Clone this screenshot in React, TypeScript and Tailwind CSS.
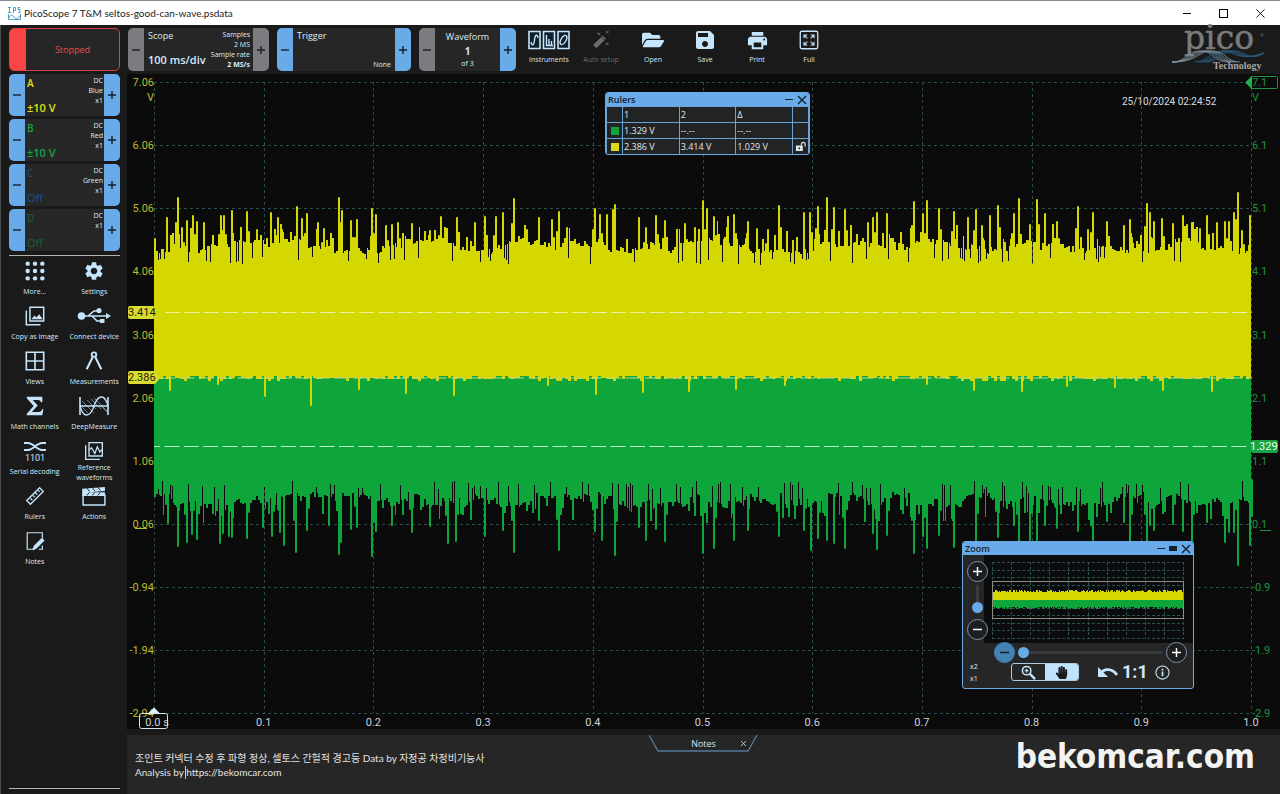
import { ReactNode } from 'react';
import { FaFolderOpen, FaHandPaper } from 'react-icons/fa';
import { MdPrint, MdSave, MdSettings } from 'react-icons/md';

const X0 = 154;
const X1 = 1251;
const YELLOW = '#d4d800';
const GREEN = '#0ea53a';

// [x, y] of the spikes that stand out of the noise band
const yellowPeaks = [
  [155, 239], [167, 218], [178, 198], [182, 228], [187, 221], [193, 216], [197, 222], [204, 223], [221, 216], [224, 216], [232, 211], [247, 212], [257, 230],
  [271, 213], [278, 218], [282, 230], [297, 207], [302, 219], [307, 214], [318, 223], [324, 229], [339, 198], [342, 211], [351, 221], [357, 220],
  [372, 209], [376, 215], [386, 226], [392, 225], [398, 223], [412, 224], [430, 231], [441, 217], [457, 218], [475, 223], [485, 217], [496, 217],
  [503, 213], [514, 199], [527, 230], [539, 218], [552, 220], [559, 212], [567, 228], [595, 209], [600, 215], [607, 215], [613, 210], [615, 205],
  [639, 218], [646, 228], [656, 216], [665, 221], [685, 224], [695, 228], [703, 201], [707, 209], [714, 217], [728, 217], [734, 215], [748, 222],
  [757, 229], [768, 230], [779, 206], [804, 213], [810, 213], [818, 207], [827, 198], [834, 208], [845, 210], [868, 223], [873, 218], [877, 213], [887, 214],
  [914, 202], [923, 214], [927, 201], [939, 209], [954, 212], [968, 218], [976, 210], [982, 226], [990, 216], [998, 206], [1014, 214], [1019, 199],
  [1030, 225], [1037, 200], [1045, 214], [1057, 222], [1078, 207], [1088, 230], [1093, 213], [1107, 222], [1124, 226], [1130, 220], [1147, 204],
  [1150, 213], [1154, 222], [1162, 219], [1173, 224], [1183, 216], [1187, 225], [1192, 223], [1200, 229], [1207, 216], [1217, 223], [1225, 222],
  [1229, 222], [1234, 213], [1238, 193], [1242, 231], [1250, 216],
];

const yellowDips = [
  [170, 390], [218, 384], [265, 396], [311, 405], [359, 389], [406, 393], [454, 395], [548, 385], [596, 394], [643, 392], [689, 391], [736, 389],
  [785, 385], [927, 384], [974, 390], [1022, 391], [1067, 386], [1115, 387], [1163, 390], [1212, 391],
];

const greenDips = [
  [168, 523], [178, 546], [187, 542], [192, 534], [197, 539], [220, 543], [223, 533], [229, 536], [232, 537], [247, 538], [263, 527], [272, 536],
  [280, 532], [284, 545], [296, 552], [307, 530], [329, 525], [339, 554], [341, 542], [351, 529], [357, 527], [372, 556], [376, 531], [392, 525],
  [412, 532], [430, 526], [448, 543], [456, 541], [485, 536], [503, 530], [514, 552], [539, 520], [559, 550], [595, 531], [602, 540], [615, 555],
  [639, 527], [646, 540], [656, 529], [665, 541], [703, 553], [714, 548], [734, 540], [748, 530], [779, 536], [804, 530], [811, 550], [818, 538],
  [827, 540], [834, 543], [845, 548], [873, 533], [877, 549], [887, 535], [914, 553], [923, 536], [927, 548], [939, 535], [954, 547], [976, 540],
  [998, 537], [1014, 525], [1019, 542], [1030, 540], [1037, 540], [1045, 525], [1057, 528], [1078, 531], [1093, 540], [1107, 521], [1124, 522],
  [1130, 541], [1147, 542], [1150, 525], [1154, 530], [1173, 524], [1183, 531], [1192, 542], [1207, 522], [1225, 542], [1229, 532], [1234, 532],
  [1238, 565], [1250, 545],
];

function randomFrom(seed: number) {
  let s = seed;
  return () => {
    s = (s * 16807) % 2147483647;
    return s / 2147483647;
  };
}

// Stepped outline of one side of a band. `out` is the direction the noise grows in,
// -1 for up and 1 for down.
function noise(seed: number, base: number, out: number) {
  const rnd = randomFrom(seed);
  let d = '';
  let drift = 0.4;
  for (let x = X0; x < X1; x += 2) {
    drift = Math.min(1, Math.max(0, drift + (rnd() - 0.5) * 0.7));
    let level = 3 + 11 * drift + 5 * rnd();
    if (rnd() < 0.28) level += 20 * rnd();
    if (rnd() < 0.2) {
      // a gap one pixel wide
      d += `V${Math.round(base - out * 8 * rnd())}H${x + 1}`;
    }
    d += `V${Math.round(base + out * level)}H${Math.min(x + 2, X1)}`;
  }
  return d;
}

function fringe(seed: number) {
  const rnd = randomFrom(seed);
  let d = '';
  for (let x = X0; x < X1; x += 3) {
    const r = rnd();
    const y = r < 0.3 ? 376 : r < 0.6 ? 378 : r < 0.88 ? 379 : 381;
    d += `V${y}H${Math.min(x + 3, X1)}`;
  }
  return d;
}

// most spikes lean on a shorter neighbour
function spikes(points: number[][], from: number, skirt = 0) {
  return points
    .map(([x, y], i) => `M${x} ${from}V${y}${skirt && i % 3 !== 1 ? `M${Math.max(X0 + 1, x + (i % 2 ? 2 : -2))} ${from}V${Math.round(y + (from - y) * skirt)}` : ''}`)
    .join('');
}

const yellowBand = `M${X0} 374${noise(11, 257, -1)}V374Z`;
const yellowFringe = `M${X0} 370${fringe(5)}V370Z`;
const greenBand = `M${X0} 375${noise(29, 489, 1)}V375Z`;

const rows = [82, 145, 208, 271, 335, 398, 461, 524, 587, 650, 713];
const leftLabels = ['7.06', '6.06', '5.06', '4.06', '3.06', '2.06', '1.06', '0.06', '-0.94', '-1.94', '-2.94'];
const rightLabels = ['7.1', '6.1', '5.1', '4.1', '3.1', '2.1', '1.1', '0.1', '-0.9', '-1.9', '-2.9'];
const columns = Array.from({ length: 11 }, (_, i) => X0 + i * 109.7);

function Plot() {
  return (
    <svg viewBox="127 74 1153 655" className="block w-full font-[Roboto,sans-serif] text-[11px]" role="img" aria-label="Scope view">
      <g stroke="#2b4f4a" strokeDasharray="3 3">
        {rows.map((y) => <path key={y} d={`M${X0} ${y + 0.5}H${X1}`} />)}
        {columns.map((x) => <path key={x} d={`M${Math.round(x) + 0.5} 82V713`} />)}
      </g>
      <path d={greenBand} fill={GREEN} />
      <path d={spikes(greenDips, 480, 0.45)} stroke={GREEN} strokeWidth="2" strokeLinecap="round" />
      <path d={yellowBand} fill={YELLOW} />
      <path d={yellowFringe} fill={YELLOW} />
      <path d={spikes(yellowPeaks, 270, 0.35)} stroke={YELLOW} strokeWidth="2" strokeLinecap="round" />
      <path d={spikes(yellowDips, 374)} stroke={YELLOW} strokeWidth="2" strokeLinecap="round" />
      <path d="M165 312.500H1252" stroke="#f1f0a8" strokeDasharray="15 4.400" />
      <path d="M160 378H1252" stroke="#c3d68c" strokeDasharray="15 4.400" />
      <path d="M154 446.500H1252" stroke="#b9efc4" strokeDasharray="15 4.400" strokeDashoffset="9" />

      <g fill="#b9bd2c" textAnchor="end">
        {rows.map((y, i) => <text key={y} x="154" y={y + 4}>{leftLabels[i]}</text>)}
        <text x="154" y="101">V</text>
      </g>
      <path d="M135 528.500H147" stroke="#b9bd2c" />
      <g fill="#1f9140">
        {rows.map((y, i) => <text key={y} x="1252" y={y + 4}>{rightLabels[i]}</text>)}
        <text x="1252" y="101">V</text>
      </g>
      <path d="M1260 530.500H1271" stroke="#1f9140" />
      <rect x="1250.500" y="76.500" width="27" height="12" rx="1" fill="none" stroke="#1f9140" />
      <path d="M1245 82.500L1252 76V89Z" fill="#22b04c" />

      <rect x="128" y="306" width="27" height="13" rx="2" fill="#d9dc2e" />
      <path d="M128 373q0-2 2-2H155l5 7-5 6H130q-2 0-2-2Z" fill="#d9dc2e" />
      <g fill="#1b1b08">
        <text x="128" y="316">3.414</text>
        <text x="128" y="381">2.386</text>
      </g>
      <rect x="1251" y="440" width="27" height="13" rx="2" fill="#17a441" />
      <text x="1250" y="450" fill="#e9ffee">1.329</text>

      <g fill="#c9d3d9" textAnchor="middle">
        {columns.map((x, i) => <text key={x} x={i === 0 ? 157 : x} y="726">{i === 0 ? '0.0 s' : (i / 10).toFixed(1)}</text>)}
      </g>
      <rect x="139.500" y="713.500" width="28" height="15" rx="2" fill="none" stroke="#d5e4ee" />
      <path d="M154 707.500L160 713.500H148Z" fill="#def1ff" />
      <text x="1122" y="105" fill="#d5dde2" className="text-[10px]">25/10/2024 02:24:52</text>
    </svg>
  );
}

function Stepper({ sign, muted, side, label }: { sign: string; muted?: boolean; side: 'l' | 'r'; label: string }) {
  return (
    <button
      aria-label={label}
      className={`w-4 shrink-0 flex items-center justify-center text-[#14202b] ${muted ? 'bg-[#7c7c80]' : 'bg-[#69abe8]'} ${side === 'l' ? 'rounded-l-[5px]' : 'rounded-r-[5px]'}`}
    >
      <svg viewBox="0 0 10 10" className="size-[10px]" stroke="currentColor" strokeWidth="1.4">
        <path d={sign === '+' ? 'M1 5h8M5 1v8' : 'M1 5h8'} />
      </svg>
    </button>
  );
}

interface ChannelProps {
  name: string;
  range: string;
  color: string;
  info: string[];
}

function Channel({ name, range, color, info }: ChannelProps) {
  return (
    <div className="flex h-[42px]">
      <Stepper sign="-" side="l" label={`Channel ${name} range down`} />
      <div className={`flex-1 flex justify-between bg-[#272727] pl-[2px] pr-px ${color}`}>
        <div className="flex flex-col justify-between pt-px whitespace-nowrap">
          <span className="text-[10px] leading-[16px]">{name}</span>
          <span className="text-[11px] leading-[16px]">{range}</span>
        </div>
        <div className="-ml-4 pt-[2px] text-right text-[7px] leading-[10px] font-normal text-[#dcecf6]">
          {info.map((line) => <div key={line}>{line}</div>)}
        </div>
      </div>
      <Stepper sign="+" side="r" label={`Channel ${name} range up`} />
    </div>
  );
}

function Icon({ children, box = '0 0 24 24', size = 'h-[22px] w-[22px]' }: { children: ReactNode; box?: string; size?: string }) {
  return (
    <svg viewBox={box} className={size} fill="none" stroke="currentColor" strokeWidth="1.6">
      {children}
    </svg>
  );
}

const dots = [4, 12, 20];

const tools: { label: string; icon: ReactNode }[] = [
  { label: 'More...', icon: <Icon>{dots.map((y) => dots.map((x) => <circle key={`${x}${y}`} cx={x} cy={y} r="2.4" fill="currentColor" stroke="none" />))}</Icon> },
  { label: 'Settings', icon: <MdSettings className="size-[22px]" /> },
  {
    label: 'Copy as image',
    icon: <Icon><path d="M6.500 2.500h15v15h-15zM2.500 6v15.500H18" /><path d="M8 15.500l3.500-4 2 2 3-3.500 4 5.500z" fill="currentColor" stroke="none" /></Icon>,
  },
  {
    label: 'Connect device',
    icon: (
      <Icon box="0 0 34 20" size="h-[20px] w-[34px]">
        <circle cx="4.500" cy="10" r="3" fill="currentColor" />
        <path d="M6 10h24M11 10l6-5h4M15 10l5 5h4" />
        <path d="M29 7l5 3-5 3z" fill="currentColor" stroke="none" />
        <circle cx="22" cy="4.500" r="1.800" fill="currentColor" />
        <rect x="23" y="13" width="4.500" height="4" fill="currentColor" stroke="none" />
      </Icon>
    ),
  },
  { label: 'Views', icon: <Icon><path d="M2.500 2.500h19v19h-19zM12 2.500v19M2.500 12h19" strokeWidth="1.800" /></Icon> },
  { label: 'Measurements', icon: <Icon><circle cx="12" cy="5" r="2.500" strokeWidth="2" /><path d="M10.500 8L4 21M13.500 8L20 21" strokeWidth="2.300" /></Icon> },
  { label: 'Math channels', icon: <Icon><path d="M3 2h17v6h-1.500q-.5-2.500-3-2.500H9.500l5.500 6-6.500 7H16q3 0 3.700-3h1.500L20 22H3v-1.500L10.500 12 3 3.500z" fill="currentColor" stroke="none" /></Icon> },
  {
    label: 'DeepMeasure',
    icon: (
      <Icon box="0 0 32 20" size="h-[20px] w-[32px]">
        <path d="M2 1v18M30 1v18M2 10h28" strokeWidth="1.600" />
        <path d="M2 10C5 22 12 22 16 10S27-2 30 10" strokeWidth="1.300" />
        <path d="M4 5l12 12M9 4l9 9M13 3l10 10M3 10l7 7M16 2l13 13M23 10l6 6" strokeWidth=".5" />
      </Icon>
    ),
  },
  {
    label: 'Serial decoding',
    icon: (
      <Icon box="0 0 24 22" size="h-[22px] w-[24px]">
        <path d="M1 3h4c5 0 9 7 14 7h4M1 10h4c5 0 9-7 14-7h4" strokeWidth="2" />
        <text x="12" y="21" fill="currentColor" stroke="none" textAnchor="middle" className="font-[Roboto,sans-serif] text-[9px]">1101</text>
      </Icon>
    ),
  },
  {
    label: 'Reference waveforms',
    icon: <Icon size="h-[20px] w-[20px]"><path d="M6 2h16v16H6zM2 5v17h17" /><path d="M6 11l3-3 4 7 3-8 3 6 3-3" strokeWidth="1.500" /></Icon>,
  },
  {
    label: 'Rulers',
    icon: <Icon><path d="M3 17L17 3l4 4L7 21zM7 14.500l2 2M10 11.500l1.500 1.500M12.500 8.500l2 2M15.500 6l1.500 1.500" strokeWidth="1.500" /></Icon>,
  },
  {
    label: 'Actions',
    icon: (
      <Icon box="0 0 28 22" size="h-[20px] w-[26px]">
        <path d="M2 10h24v11H2z" strokeWidth="1.600" />
        <path d="M1 3l25-2v4.500L1 7.500zM1 7h25v4H1z" fill="currentColor" stroke="none" />
        <path d="M6 2l3 4M12 1.500l3 4M18 1l3 4M9 7l-3 3.500M15 7l-3 3.500M21 7l-3 3.500" stroke="#1a1a1a" strokeWidth="1" />
      </Icon>
    ),
  },
  {
    label: 'Notes',
    icon: <Icon><path d="M20 9V3H3.500v18H12M20 17v4h-4" strokeWidth="1.300" /><path d="M19.500 8.500l3 3-9 9-4.500 1.500 1.500-4.500z" fill="currentColor" stroke="none" /></Icon>,
  },
];

function Sidebar() {
  return (
    <aside className="w-[127px] shrink-0 flex flex-col border-l border-[#4a4d4f] bg-[#1a1a1a] pl-2 pr-[7px] pt-[3px] pb-[5px]">
      <div className="flex flex-col gap-[3px]">
        <button className="flex h-[43px] overflow-hidden rounded-[5px] border border-[#d84444] bg-[#262626] text-[9px] text-[#f04a4a]">
          <span className="w-4 self-stretch bg-[#fb4545]" />
          <span className="flex-1 self-center">Stopped</span>
        </button>
        <Channel name="A" range="±10 V" color="text-[#dfe018] font-semibold" info={['DC', 'Blue', 'x1']} />
        <Channel name="B" range="±10 V" color="text-[#18a345] font-semibold" info={['DC', 'Red', 'x1']} />
        <Channel name="C" range="Off" color="text-[#1e4f95]" info={['DC', 'Green', 'x1']} />
        <Channel name="D" range="Off" color="text-[#186332]" info={['DC', 'x1']} />
      </div>
      <div className="mt-1 border-t border-[#b8b2a8]" />
      <div className="-mx-1 mt-[3px] grid grid-cols-2">
        {tools.map(({ label, icon }) => (
          <button key={label} className="flex h-[45px] flex-col items-center text-[7px] leading-[10px] text-[#d9ebf7]">
            <span className="flex h-6 shrink-0 items-center justify-center text-[#c4e5fb]">{icon}</span>
            <span className={label === 'Reference waveforms' ? 'w-10' : 'mt-1 whitespace-nowrap'}>{label}</span>
          </button>
        ))}
      </div>
      <div className="mt-auto border-t border-[#b8b2a8]" />
    </aside>
  );
}

const actions: { label: string; icon: ReactNode; off?: boolean }[] = [
  {
    label: 'Instruments',
    icon: (
      <Icon box="0 0 42 20" size="h-[20px] w-[42px]">
        <path d="M1 1.500h11v17H1zM15.500 1.500h11v17h-11zM30 1.500h11v17H30z" fill="#10202c" />
        <path d="M3 12c1 4 3 4 3.500-2S9.500 4 10 8M18.500 5v10.500h6.500M21 9v6M23.500 11v4" strokeWidth="1.400" />
        <ellipse cx="35.500" cy="10" rx="2.500" ry="5" transform="rotate(30 35.500 10)" strokeWidth="1.400" />
      </Icon>
    ),
  },
  {
    label: 'Auto setup',
    off: true,
    icon: (
      <Icon size="h-[20px] w-[20px]">
        <path d="M4.500 20L16 8.500" strokeWidth="5.500" />
        <path d="M12.500 8.500l3.500 3.500" stroke="#1a1a1a" strokeWidth="1" />
        <path d="M8 3l3 3M11 3L8 6M18 1l3 3M21 1l-3 3M18 15l3 3M21 15l-3 3" strokeWidth="1.200" />
      </Icon>
    ),
  },
  { label: 'Open', icon: <FaFolderOpen className="size-[22px]" /> },
  { label: 'Save', icon: <MdSave className="size-[24px]" /> },
  { label: 'Print', icon: <MdPrint className="size-[23px]" /> },
  {
    label: 'Full',
    icon: (
      <Icon size="h-[20px] w-[20px]">
        <rect x="1.500" y="1.500" width="21" height="21" rx="2" />
        <path d="M6 10V6h4M14 6h4v4M18 14v4h-4M10 18H6v-4M6 6l4 4M18 6l-4 4M18 18l-4-4M6 18l4-4" strokeWidth="1.300" />
      </Icon>
    ),
  },
];

function PicoLogo() {
  return (
    <svg viewBox="0 0 100 46" className="ml-auto h-[46px] w-[100px] shrink-0 overflow-visible" role="img" aria-label="Pico Technology">
      <text x="47" y="21" textAnchor="middle" fill="#7b7b7b" stroke="#7b7b7b" strokeWidth=".5" className="font-['DejaVu_Serif',serif] text-[33px]">pico</text>
      <circle cx="90" cy="7" r="1.300" fill="none" stroke="#6b6b6b" strokeWidth=".6" />
      <g fill="none" strokeWidth=".8">
        {[0, 3, 6, 9, 12].map((o) => (
          <g key={o}>
            <path d={`M0 34C${14 + o} 34 ${14 + o} 23 ${28 + o} 23S${42 + o} 34 ${56 + o} 34`} stroke="#8195a3" />
            <path d={`M${22 + o} 34C${36 + o} 34 ${38 + o} 23 ${50 + o} 23S${66 + o} 34 92 25`} stroke="#2c5a7c" />
          </g>
        ))}
      </g>
      <text x="41" y="41" fill="#a5a5a5" className="font-['Liberation_Serif',serif] text-[10px] font-bold">Technology</text>
    </svg>
  );
}

function Toolbar() {
  return (
    <header className="flex h-[49px] shrink-0 items-start gap-2 bg-[#1a1a1a] pl-px pr-2 pt-[3px] text-[#dcecf6]">
      <div className="flex h-[43px] w-[141px] shrink-0">
        <Stepper sign="-" side="l" muted label="Timebase down" />
        <div className="flex flex-1 justify-between bg-[#262626] pl-1 pr-[3px] whitespace-nowrap">
          <div className="flex flex-col justify-between pt-px pb-1">
            <span className="text-[9px] leading-[14px]">Scope</span>
            <span className="text-[11px] leading-[14px] font-semibold text-[#d3ebff]">100 ms/div</span>
          </div>
          <div className="-ml-4 pt-[2px] text-right text-[7px] leading-[10px]">
            <div>Samples</div>
            <div>2 MS</div>
            <div>Sample rate</div>
            <div className="font-bold">2 MS/s</div>
          </div>
        </div>
        <Stepper sign="+" side="r" muted label="Timebase up" />
      </div>
      <div className="flex h-[43px] w-[134px] shrink-0">
        <Stepper sign="-" side="l" label="Trigger previous" />
        <div className="flex flex-1 flex-col justify-between bg-[#262626] px-1 pb-px">
          <span className="text-[9px] leading-[15px]">Trigger</span>
          <span className="text-right text-[7px] leading-[10px]">None</span>
        </div>
        <Stepper sign="+" side="r" label="Trigger next" />
      </div>
      <div className="flex h-[43px] w-[97px] shrink-0">
        <Stepper sign="-" side="l" muted label="Previous waveform" />
        <div className="flex flex-1 flex-col items-center bg-[#262626] pt-[2px]">
          <span className="text-[9px] leading-[14px]">Waveform</span>
          <span className="text-[10px] leading-[14px] font-bold text-[#c9e6fd]">1</span>
          <span className="text-[7px] leading-[12px]">of 3</span>
        </div>
        <Stepper sign="+" side="r" label="Next waveform" />
      </div>
      <nav className="-ml-px flex">
        {actions.map(({ label, icon, off }) => (
          <button key={label} disabled={off} className={`flex w-[52px] flex-col items-center text-[7px] leading-[10px] ${off ? 'text-[#6b6b6b]' : 'text-[#d3e9f8]'}`}>
            <span className={`flex h-6 items-center ${off ? '' : 'text-[#c4e5fb]'}`}>{icon}</span>
            <span className="mt-[3px] whitespace-nowrap">{label}</span>
          </button>
        ))}
      </nav>
      <PicoLogo />
    </header>
  );
}

function Cross() {
  return (
    <svg viewBox="0 0 10 10" className="size-[10px]" stroke="currentColor" strokeWidth="1.400">
      <path d="M1 1l8 8M9 1L1 9" />
    </svg>
  );
}

function PanelTitle({ title, restore }: { title: string; restore?: boolean }) {
  return (
    <div className="flex h-[13px] items-center gap-1 bg-[#69abe8] px-[2px] text-[#14202b]">
      <span className="mr-auto text-[9px] leading-[13px] font-semibold">{title}</span>
      <button aria-label="Minimise" className="h-px w-2 bg-[#14202b]" />
      {restore && <button aria-label="Restore" className="h-[5px] w-2 bg-[#14202b]" />}
      <button aria-label="Close"><Cross /></button>
    </div>
  );
}

function RulersPanel() {
  const cell = 'border border-[#69a3d6] px-px';
  return (
    <section className="absolute left-[478px] top-[18px] w-[205px] overflow-hidden rounded-[3px] border border-[#69abe8] bg-[#222324] text-[#e2e8ec]">
      <PanelTitle title="Rulers" />
      <table className="-mb-px w-full table-fixed border-collapse text-left text-[9px] leading-[15px]">
        <colgroup>
          <col className="w-4" />
          <col />
          <col />
          <col />
          <col className="w-4" />
        </colgroup>
        <thead>
          <tr>
            <th className={cell} />
            <th className={`${cell} font-normal`}>1</th>
            <th className={`${cell} font-normal`}>2</th>
            <th className={`${cell} font-normal`}>Δ</th>
            <th className={cell} />
          </tr>
        </thead>
        <tbody>
          <tr>
            <td className={cell}><div className="mx-auto size-2 bg-[#0ea53a]" /></td>
            <td className={cell}>1.329 V</td>
            <td className={cell}>--.--</td>
            <td className={cell}>--.--</td>
            <td className={cell} />
          </tr>
          <tr>
            <td className={cell}><div className="mx-auto size-2 bg-[#dcd918]" /></td>
            <td className={cell}>2.386 V</td>
            <td className={cell}>3.414 V</td>
            <td className={cell}>1.029 V</td>
            <td className={cell}>
              <button aria-label="Lock rulers" className="mx-auto block">
                <Icon box="0 0 12 12" size="size-[11px]">
                  <path d="M1 5h7.500v6H1z" fill="currentColor" stroke="none" />
                  <path d="M7 5V3.500a2 2 0 0 1 4 0V6" strokeWidth="1.300" />
                  <path d="M4.700 7v2" stroke="#222324" />
                </Icon>
              </button>
            </td>
          </tr>
        </tbody>
      </table>
    </section>
  );
}

function RoundButton({ sign, label, filled }: { sign: string; label: string; filled?: boolean }) {
  return (
    <button
      aria-label={label}
      className={`flex size-[21px] shrink-0 items-center justify-center rounded-full border ${filled ? 'border-[#4383b4] bg-[#4383b4] text-[#14202b]' : 'border-[#7d93a8] bg-[#1d1e20] text-white'}`}
    >
      <svg viewBox="0 0 10 10" className="size-[9px]" stroke="currentColor" strokeWidth="1.600">
        <path d={sign === '+' ? 'M0 5h10M5 0v10' : 'M0 5h10'} />
      </svg>
    </button>
  );
}

// small overview of the whole buffer
function Overview() {
  const rnd = randomFrom(77);
  let top = 'M0 32';
  let bottom = 'M0 43';
  for (let x = 0; x < 192; x++) {
    top += `V${rnd() > 0.7 ? 28 : 29 + Math.round(rnd())}H${x + 1}`;
    bottom += `V${rnd() > 0.8 ? 47 : 45 + Math.round(rnd())}H${x + 1}`;
  }
  return (
    <svg viewBox="-1 0 194 78" className="w-full" role="img" aria-label="Waveform overview">
      <g stroke="#2b4f4a" strokeDasharray="3 2">
        {Array.from({ length: 11 }, (_, i) => <path key={i} d={`M${Math.round(i * 19.1) + 0.5} 0V76`} />)}
        {Array.from({ length: 11 }, (_, i) => <path key={i} d={`M0 ${Math.round(i * 7.6) + 0.5}H192`} />)}
      </g>
      <path d={`${bottom}V37H0Z`} fill={GREEN} />
      <path d={`${top}V38H0Z`} fill={YELLOW} />
      <rect x=".5" y="19.500" width="191" height="37" fill="none" stroke="#8f8f80" />
    </svg>
  );
}

const range =
  'appearance-none rounded bg-[#3a3b3d] [&::-webkit-slider-thumb]:appearance-none [&::-webkit-slider-thumb]:size-[11px] [&::-webkit-slider-thumb]:rounded-full [&::-webkit-slider-thumb]:bg-[#69abe8]';

function ZoomPanel() {
  return (
    <section className="absolute right-[86px] top-[467px] w-[232px] overflow-hidden rounded-[3px] border border-[#69abe8] bg-[#262626] text-[#e2e8ec]">
      <PanelTitle title="Zoom" restore />
      <div className="flex h-[88px]">
        <div className="z-10 flex w-[21px] shrink-0 flex-col items-start justify-between pt-[6px] pb-[3px] pl-1">
          <RoundButton sign="+" label="Zoom in vertically" />
          <input type="range" aria-label="Vertical zoom" defaultValue={0} className={`${range} mb-1 ml-[9px] h-[28px] w-[3px] [writing-mode:vertical-lr] [direction:rtl]`} />
          <RoundButton sign="-" label="Zoom out vertically" />
        </div>
        <div className="flex-1 bg-[#0b0c0d] pl-[7px] pr-2 pt-[7px]">
          <Overview />
        </div>
      </div>
      <div className="flex px-[6px] pb-[3px]">
        <div className="w-[25px] pt-[18px] pl-px text-[7px] leading-[12px]">
          <div>x2</div>
          <div>x1</div>
        </div>
        <div className="flex-1">
          <div className="flex h-[19px] items-center gap-[3px]">
            <RoundButton sign="-" label="Zoom out" filled />
            <input type="range" aria-label="Horizontal zoom" defaultValue={0} className={`${range} h-[3px] min-w-0 flex-1`} />
            <RoundButton sign="+" label="Zoom in" />
          </div>
          <div className="flex items-center pl-[17px] pr-[17px]">
            <div className="flex h-[18px] w-[68px] overflow-hidden rounded-[3px] border border-[#a9cbe4]">
              <button aria-label="Marquee zoom" className="flex flex-1 items-center justify-center text-[#c4e5fb]">
                <Icon box="0 0 16 16" size="size-[15px]">
                  <circle cx="6" cy="6" r="4.500" />
                  <path d="M9.500 9.500L15 15" strokeWidth="2.500" />
                  <path d="M4 6h4M6 4v4" strokeWidth="1.200" />
                </Icon>
              </button>
              <button aria-label="Pan" className="flex flex-1 items-center justify-center bg-[#c0e3fc] text-[#1c1c1c]">
                <FaHandPaper className="size-[13px]" />
              </button>
            </div>
            <button aria-label="Undo zoom" className="ml-[18px] text-[#c4e5fb]">
              <Icon box="0 0 21 14" size="h-[14px] w-[21px]">
                <path d="M3 9c4-6 12-6 17 1" strokeWidth="2.800" />
                <path d="M1 2v10h10z" fill="currentColor" stroke="none" />
              </Icon>
            </button>
            <button className="ml-1 font-[Roboto,sans-serif] text-[18px] leading-[20px] font-bold text-[#cfe9fb]">1:1</button>
            <button aria-label="Information" className="ml-auto text-[#c4e5fb]">
              <Icon box="0 0 16 16" size="size-[15px]">
                <circle cx="8" cy="8" r="7" strokeWidth="1.200" />
                <path d="M8 7v5M8 4v1.800" strokeWidth="1.800" />
              </Icon>
            </button>
          </div>
        </div>
      </div>
    </section>
  );
}

function NotesPanel() {
  return (
    <section className="relative mt-[6px] flex-1 bg-[#262626] pb-[13px]">
      <div className="relative mx-auto flex h-4 w-[109px] items-center justify-center pt-px text-[9px] text-[#d3e5f2]">
        <svg viewBox="0 0 109 17" className="absolute inset-0" fill="none" stroke="#54799a" strokeWidth="1.300">
          <path d="M0 0l9 16H99l9-16" />
        </svg>
        <label htmlFor="notes">Notes</label>
        <button aria-label="Close notes" className="absolute right-3 top-[6px]">
          <svg viewBox="0 0 6 6" className="size-[5px]" stroke="currentColor"><path d="M0 0l6 6M6 0L0 6" /></svg>
        </button>
      </div>
      <div className="relative">
        <textarea
          id="notes"
          rows={2}
          spellCheck={false}
          className="block w-full resize-none overflow-hidden bg-transparent pl-2 font-[Lato,'Noto_Sans_CJK_KR',sans-serif] text-[10px] leading-[14px] text-[#e2e2e2] outline-none"
          defaultValue={'조인트 커넥터 수정 후 파형 정상, 셀토스 간헐적 경고등 Data by 자정공 차정비기능사\nAnalysis by https://bekomcar.com'}
        />
        <span className="absolute bottom-0 left-[58px] h-[13px] w-px bg-[#d0d0d0]" />
      </div>
      <div className="absolute right-[25px] top-0 font-['DejaVu_Sans_Condensed','DejaVu_Sans',sans-serif] text-[33px] leading-[44px] font-bold text-[#f3f3f3]">bekomcar.com</div>
    </section>
  );
}

function TitleBar() {
  return (
    <div className="flex h-[25px] shrink-0 items-center border-t border-[#8a8a8a] bg-white pl-2 text-[#1c1c1c]">
      <svg viewBox="0 0 13 13" className="mr-[3px] size-[13px]" fill="none" stroke="#4f9cc0">
        <path d="M0 .5h3M1.500 .5v5M0 5.500h3M5.500 6V.500h2v3h-2M12 .5h-2v2h2v3h-2" />
        <path d="M.5 7v5.500h12V7M1 11c2-4 3-4 5-1s3 2 6-1" />
      </svg>
      <h1 className="font-[Lato,sans-serif] text-[10px]">PicoScope 7 T&amp;M seltos-good-can-wave.psdata</h1>
      <div className="ml-auto flex items-center gap-[28px] pr-[15px]">
        <button aria-label="Minimise window" className="h-px w-2 bg-black" />
        <button aria-label="Maximise window" className="size-[9px] border border-black" />
        <button aria-label="Close window">
          <svg viewBox="0 0 10 10" className="size-[9px]" stroke="black"><path d="M.5 .5l9 9M9.500 .5l-9 9" /></svg>
        </button>
      </div>
    </div>
  );
}

export default function App() {
  return (
    <div className="flex min-h-screen flex-col bg-[#1a1a1a] font-['Open_Sans','Noto_Sans_CJK_KR',sans-serif]">
      <TitleBar />
      <div className="flex flex-1">
        <Sidebar />
        <main className="flex min-w-0 flex-1 flex-col">
          <Toolbar />
          <div className="relative bg-[#0b0b0b]">
            <Plot />
            <RulersPanel />
            <ZoomPanel />
          </div>
          <NotesPanel />
        </main>
      </div>
    </div>
  );
}
